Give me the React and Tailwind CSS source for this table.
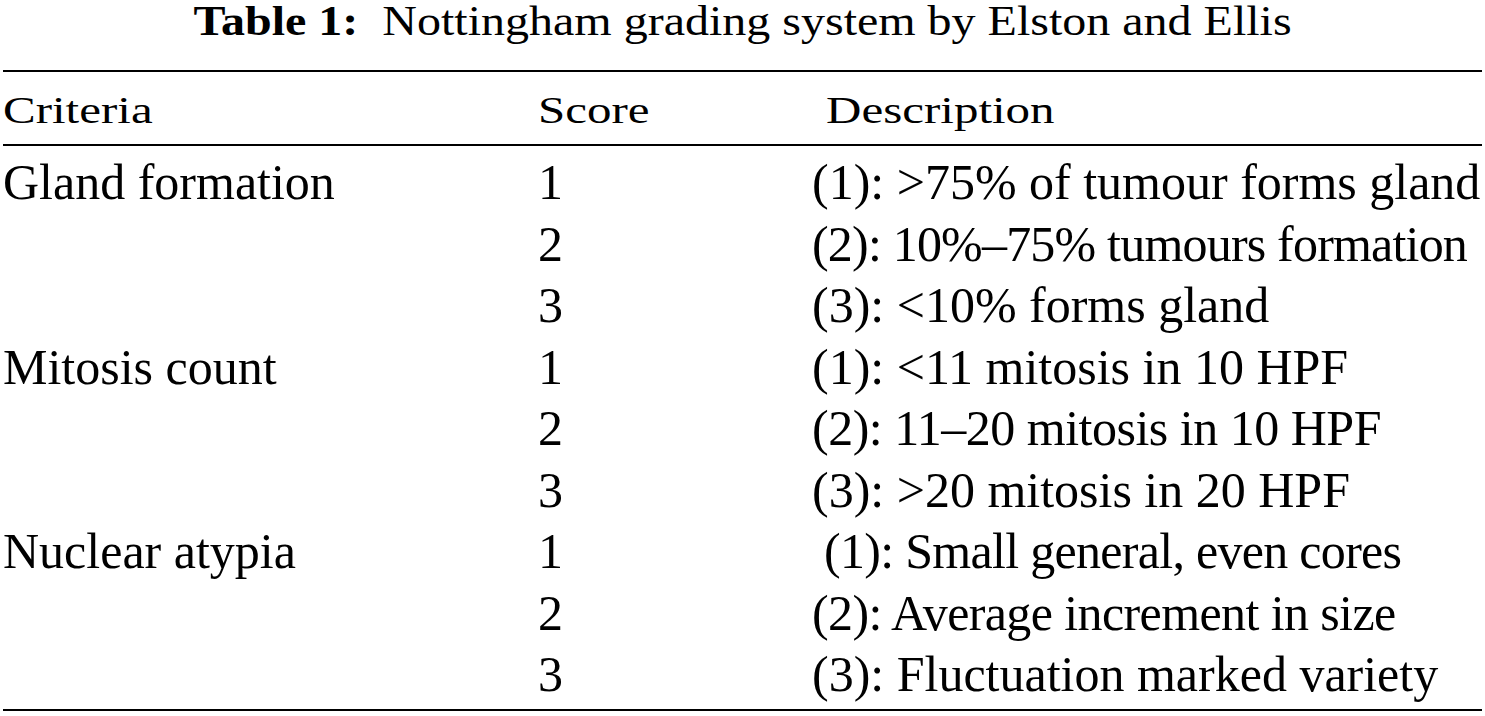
/**
 * Table 1 — Nottingham grading system
 */

const rows = [
  { criteria: 'Gland formation', score: '1', desc: '(1): >75% of tumour forms gland', track: '' },
  { criteria: '', score: '2', desc: '(2): 10%–75% tumours formation', track: 'tracking-[-0.8px]' },
  { criteria: '', score: '3', desc: '(3): <10% forms gland', track: '' },
  { criteria: 'Mitosis count', score: '1', desc: '(1): <11 mitosis in 10 HPF', track: '' },
  { criteria: '', score: '2', desc: '(2): 11–20 mitosis in 10 HPF', track: 'tracking-[-0.5px]' },
  { criteria: '', score: '3', desc: '(3): >20 mitosis in 20 HPF', track: '' },
  { criteria: 'Nuclear atypia', score: '1', desc: '(1): Small general, even cores', track: 'tracking-[-0.7px] pl-[12px]' },
  { criteria: '', score: '2', desc: '(2): Average increment in size', track: 'tracking-[-0.6px]' },
  { criteria: '', score: '3', desc: '(3): Fluctuation marked variety', track: '' },
];

export default function App() {
  return (
    <div className="w-[1485px] h-[716px] overflow-hidden bg-white text-black font-['Liberation_Serif','Times_New_Roman',serif]">
      {/* ─── Caption ─────────────────────────────────────────────── */}
      <div className="h-[48px] text-center text-[48px]">
        <span className="block leading-[48px] origin-top scale-y-[0.88]">
          <b>Table 1:</b>&nbsp; Nottingham grading system by Elston and Ellis
        </span>
      </div>

      {/* ─── Table ───────────────────────────────────────────────── */}
      <div className="mx-[3px] mt-[22px] border-t-2 border-b-2 border-black pb-[3px]">
        <div className="grid grid-cols-[535px_274px_1fr] h-[74px] leading-[74px] text-[49px] border-b-2 border-black">
          <span className="inline-block scale-y-[0.78] translate-y-[1.5px]">Criteria</span>
          <span className="inline-block scale-y-[0.78] translate-y-[1.5px]">Score</span>
          <span className="inline-block scale-y-[0.78] translate-y-[1.5px] pl-[14px]">Description</span>
        </div>
        <div className="pt-[6px] text-[50px]">
          {rows.map((r, i) => (
            <div key={i} className="grid grid-cols-[535px_274px_1fr] h-[61.5px] leading-[61.5px] whitespace-nowrap">
              <span>{r.criteria}</span>
              <span>{r.score}</span>
              <span className={r.track}>{r.desc}</span>
            </div>
          ))}
        </div>
      </div>
    </div>
  );
}
